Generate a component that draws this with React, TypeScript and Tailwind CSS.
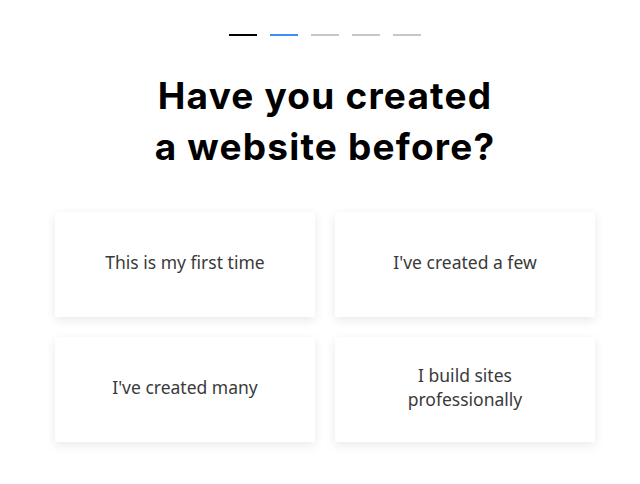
const steps = ["bg-black", "bg-[#3b8ff6]", "bg-[#c8c8c8]", "bg-[#c8c8c8]", "bg-[#c8c8c8]"];

const options = [
  "This is my first time",
  "I've created a few",
  "I've created many",
  "I build sites professionally",
];

export default function App() {
  return (
    <div className="w-[640px] h-[484px] bg-white pl-[10px] font-['Inter',sans-serif]">
      <div className="flex flex-col items-center pt-[34px]">
        {/* Progress steps */}
        <div className="flex gap-[13px]">
          {steps.map((c, i) => (
            <div key={i} className={`w-[28px] h-[2px] ${c}`}></div>
          ))}
        </div>

        <h1 className="mt-[34px] text-center text-[37px] leading-[51px] font-bold text-black tracking-[1.2px]">
          Have you created
          <br />
          a website before?
        </h1>

        {/* Options */}
        <div className="mt-[40px] grid grid-cols-2 gap-5">
          {options.map((opt) => (
            <button
              key={opt}
              className="w-[260px] h-[105px] bg-white flex items-center justify-center px-[45px] pb-[6px] text-center text-[17.5px] leading-[24px] text-[#3a3a3a] font-['Noto_Sans',sans-serif] shadow-[0_3px_10px_rgba(0,0,0,0.09)]"
            >
              {opt}
            </button>
          ))}
        </div>
      </div>
    </div>
  );
}
